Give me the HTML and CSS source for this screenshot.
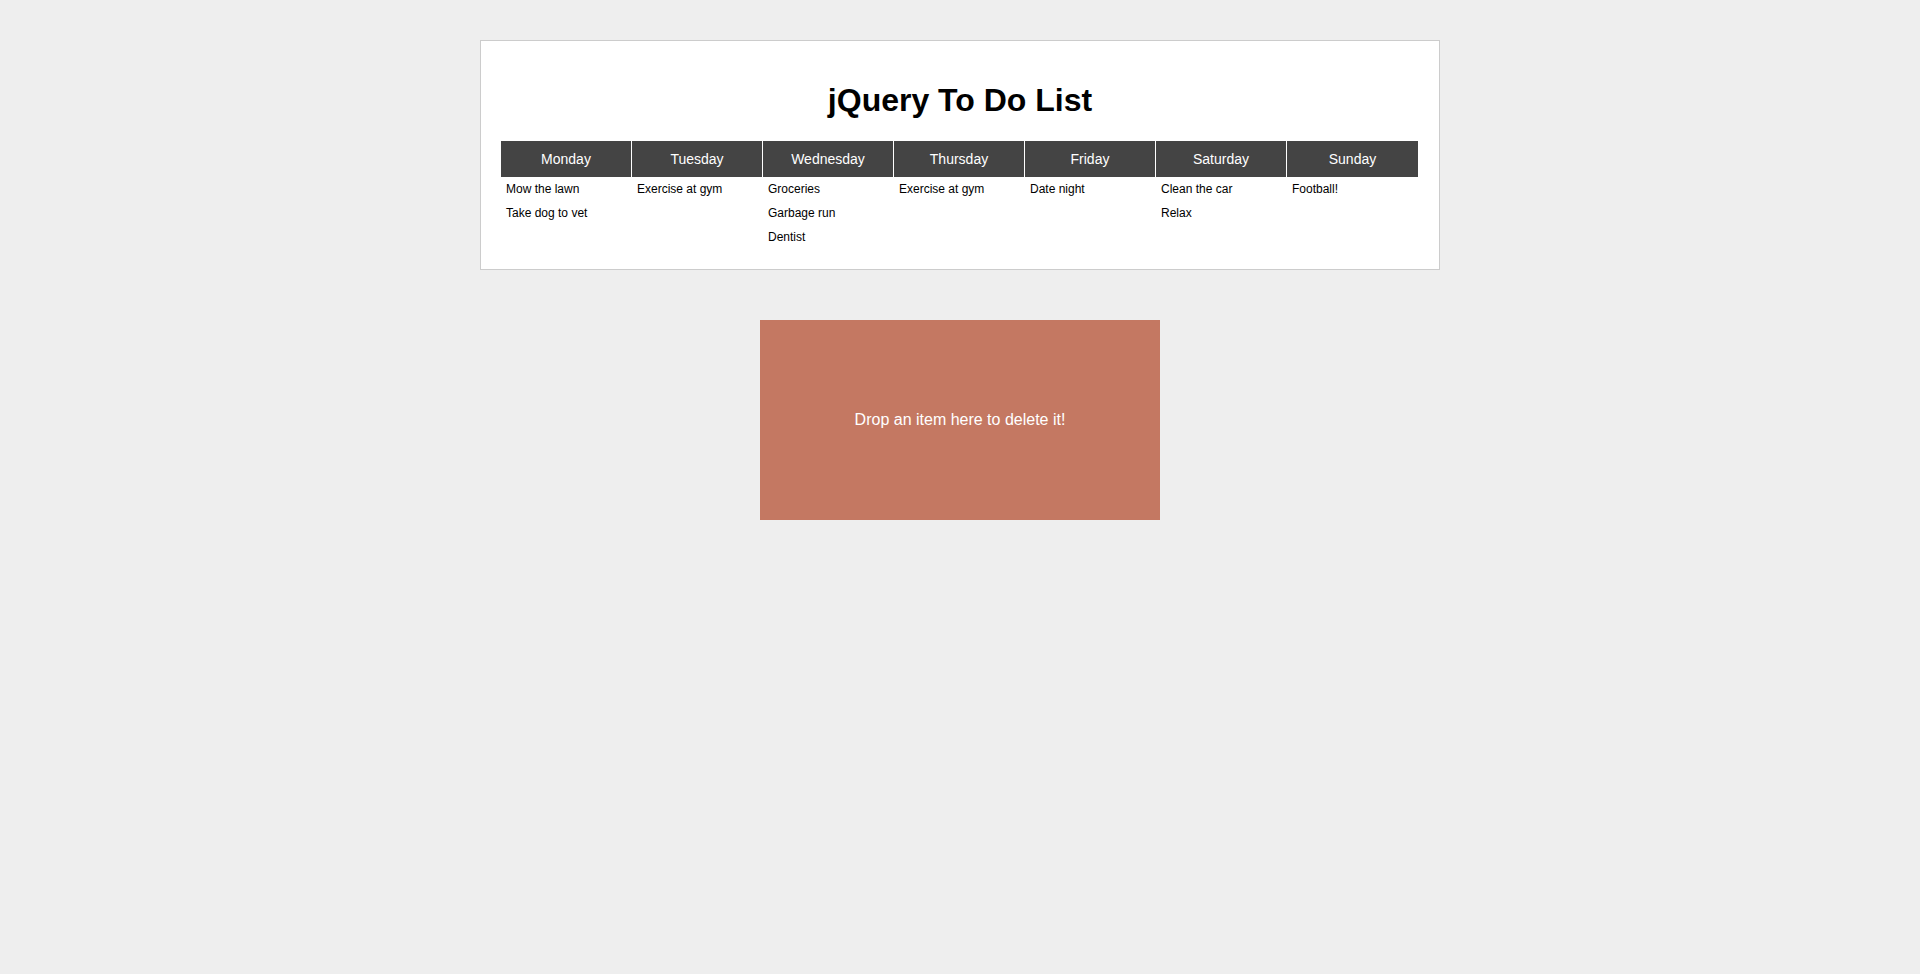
FILE: index.html
```html
<!DOCTYPE html>
<html lang="en">
<head>
<meta charset="utf-8">
<title>jQuery To Do List</title>
<link rel="stylesheet" href="styles.css">
</head>
<body>
<div class="container">
  <h1 class="title">jQuery To Do List</h1>
  <div class="week">
    <div class="day">
      <div class="day-head">Monday</div>
      <ul class="items"><li>Mow the lawn</li><li>Take dog to vet</li></ul>
    </div>
    <div class="day">
      <div class="day-head">Tuesday</div>
      <ul class="items"><li>Exercise at gym</li></ul>
    </div>
    <div class="day">
      <div class="day-head">Wednesday</div>
      <ul class="items"><li>Groceries</li><li>Garbage run</li><li>Dentist</li></ul>
    </div>
    <div class="day">
      <div class="day-head">Thursday</div>
      <ul class="items"><li>Exercise at gym</li></ul>
    </div>
    <div class="day">
      <div class="day-head">Friday</div>
      <ul class="items"><li>Date night</li></ul>
    </div>
    <div class="day">
      <div class="day-head">Saturday</div>
      <ul class="items"><li>Clean the car</li><li>Relax</li></ul>
    </div>
    <div class="day">
      <div class="day-head">Sunday</div>
      <ul class="items"><li>Football!</li></ul>
    </div>
  </div>
</div>
<div class="trash">Drop an item here to delete it!</div>
</body>
</html>
```

FILE: styles.css
```css
html, body {
  margin: 0;
  padding: 0;
  background: #eeeeee;
  font-family: "Liberation Sans", Arial, sans-serif;
  color: #000;
}

.container {
  width: 960px;
  box-sizing: border-box;
  margin: 40px auto 0;
  padding: 20px;
  background: #fff;
  border: 1px solid #cccccc;
}

.title {
  margin: 21px 0 22px;
  font-size: 32px;
  font-weight: bold;
  text-align: center;
  line-height: 37px;
}

.week {
  display: grid;
  grid-template-columns: repeat(7, 131px);
}

.day {
  border-right: 1px solid #fff;
  min-width: 0;
}

.day:last-child {
  border-right: 0;
}

.day-head {
  background: #444444;
  color: #fff;
  font-size: 14px;
  line-height: 16px;
  padding: 10px 0;
  text-align: center;
}

.items {
  list-style: none;
  margin: 0;
  padding: 0;
}

.items li {
  font-size: 12px;
  line-height: 14px;
  padding: 5px 5px;
}

.trash {
  width: 400px;
  height: 200px;
  margin: 50px auto 0;
  background: #c47862;
  color: #fff;
  font-size: 16px;
  line-height: 200px;
  text-align: center;
}
```
